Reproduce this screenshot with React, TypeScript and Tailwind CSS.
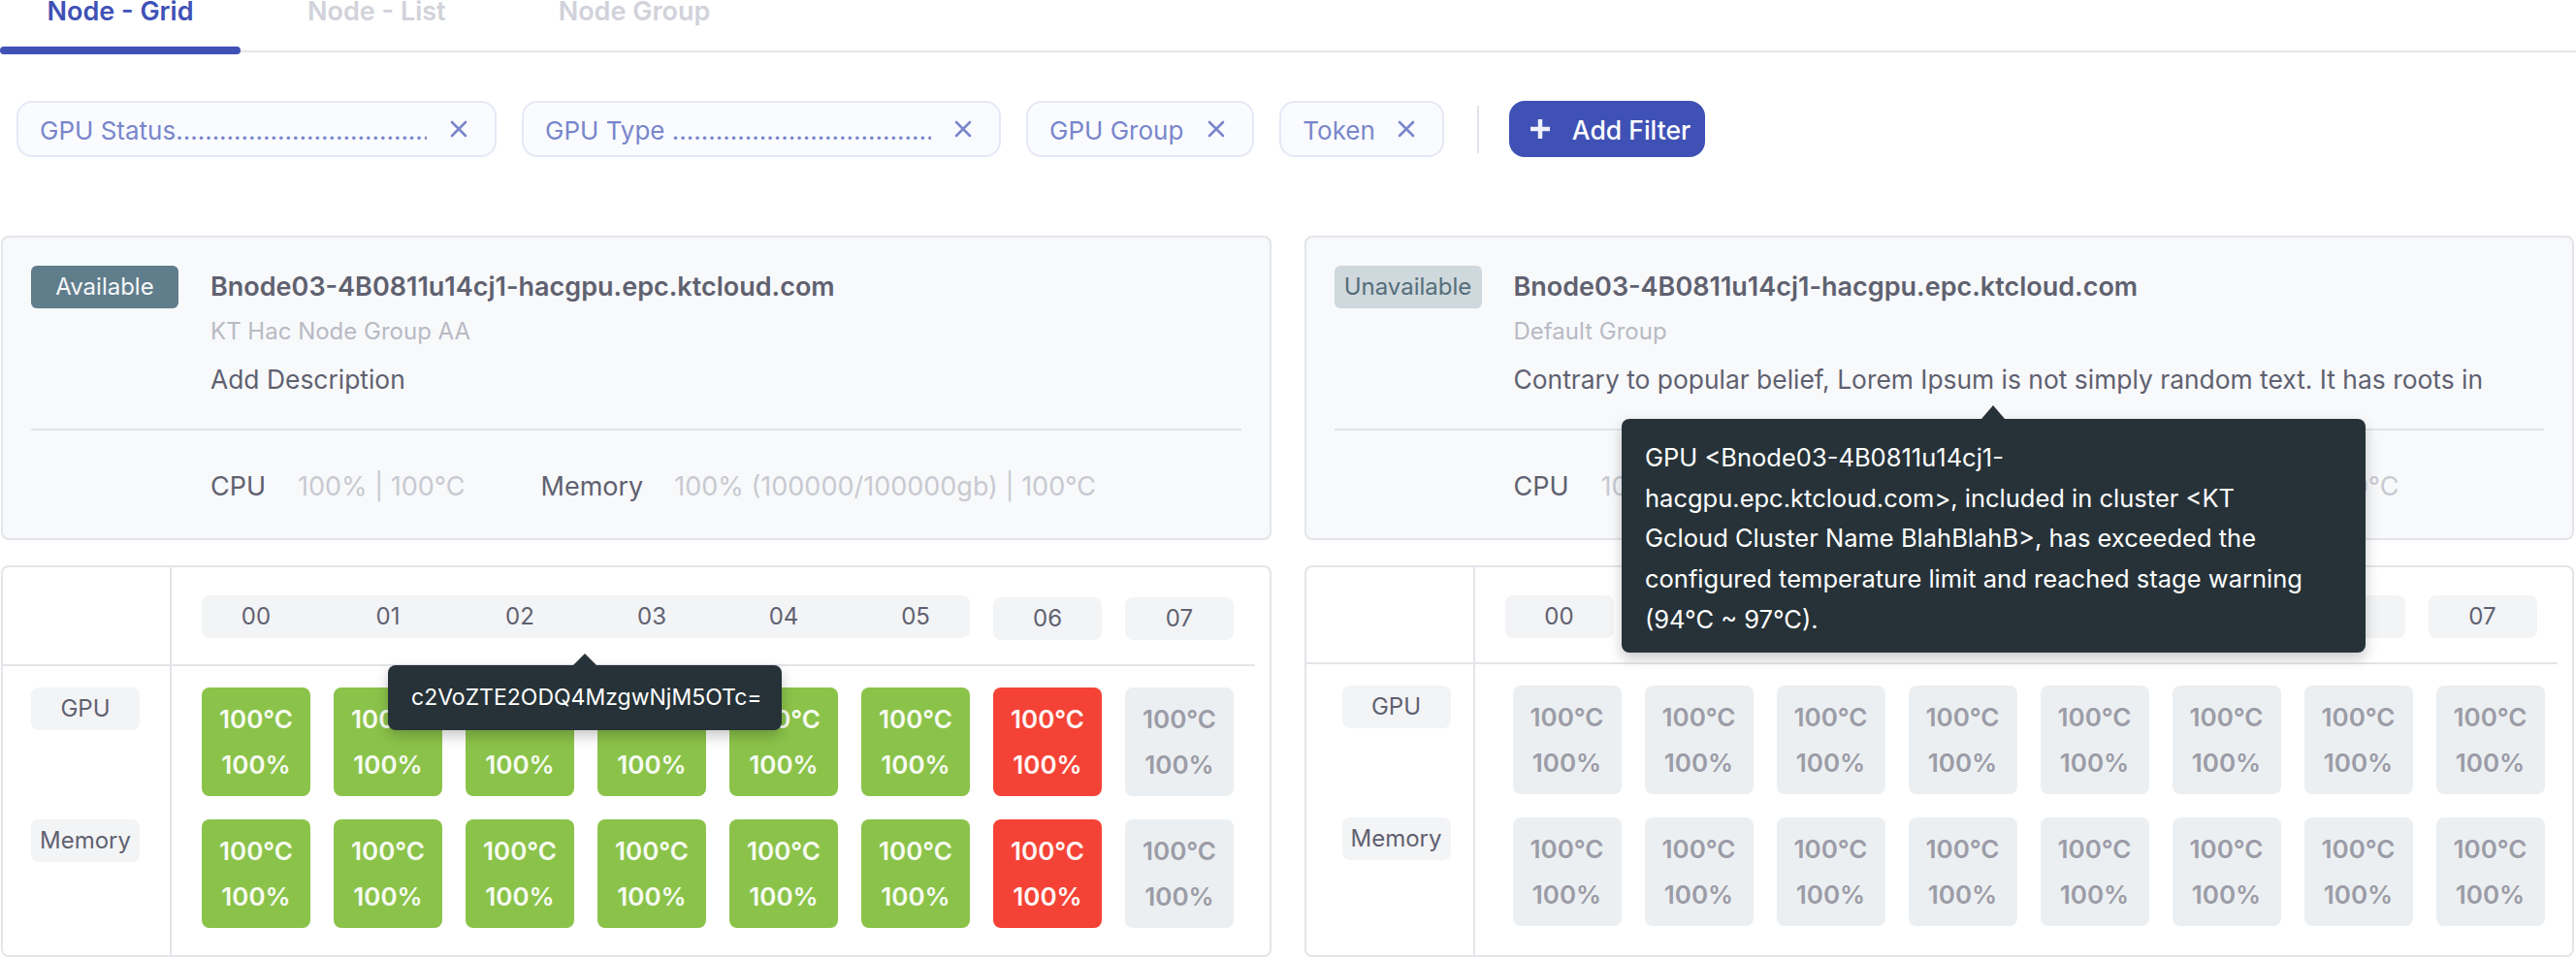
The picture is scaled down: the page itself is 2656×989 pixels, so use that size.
import React from "react";

type CellKind = "ok" | "bad" | "off";

function XIcon() {
  return (
    <svg width="18" height="18" viewBox="0 0 18 18" className="shrink-0">
      <path d="M2 2 L16 16 M16 2 L2 16" stroke="#7986cb" strokeWidth="2.6" strokeLinecap="round" fill="none" />
    </svg>
  );
}

function PlusIcon() {
  return (
    <svg width="22" height="22" viewBox="0 0 22 22" className="shrink-0">
      <path d="M11 1 V21 M1 11 H21" stroke="#eef0fa" strokeWidth="4.5" fill="none" />
    </svg>
  );
}

function Chip({ label, width, gap }: { label: string; width?: string; gap?: string }) {
  const fixed = !!width;
  return (
    <div
      className={
        "flex h-[58px] shrink-0 items-center rounded-[16px] border-2 border-[#e6e8f6] bg-[#fafbfe] pl-[22px] pr-[28px] " +
        (width ?? "")
      }
    >
      <span
        className={
          "whitespace-nowrap pt-[4px] text-[26px] leading-[32px] text-[#7986cb] " +
          (fixed ? "min-w-0 flex-1 overflow-hidden" : "")
        }
      >
        {label}
      </span>
      <span className={"flex " + (gap ?? "ml-[24px]")}>
        <XIcon />
      </span>
    </div>
  );
}

function NodeCard({
  status,
  title,
  group,
  desc,
}: {
  status: "Available" | "Unavailable";
  title: string;
  group: string;
  desc: string;
}) {
  const badge =
    status === "Available"
      ? "bg-[#607d8b] text-[#f5f7f8]"
      : "bg-[#cfd8dc] text-[#546e7a]";
  return (
    <div className="overflow-hidden rounded-[8px] border-2 border-[#e4e5ea] bg-[#f8f9fb] px-[29px] pt-[29px] pb-[35px]">
      <div className="flex gap-[33px]">
        <div
          className={
            "flex h-[44px] w-[152px] shrink-0 items-center justify-center rounded-[6px] text-[24px] " + badge
          }
        >
          {status}
        </div>
        <div className="min-w-0 flex-1">
          <div className="whitespace-nowrap text-[27px] font-semibold leading-[44px] text-[#5f6170]">{title}</div>
          <div className="mt-[8px] whitespace-nowrap text-[24px] leading-[32px] text-[#b8bac4]">{group}</div>
          <div className="mt-[15px] overflow-hidden whitespace-nowrap text-[26.4px] leading-[36px] text-[#5f6170]">
            {desc}
          </div>
        </div>
      </div>
      <div className="mt-[33px] h-[2px] bg-[#e3e4ea]" />
      <div className="mt-[40px] flex whitespace-nowrap pl-[185px] text-[27px] leading-[36px]">
        <span className="text-[#5f6170]">CPU</span>
        <span className="ml-[33px] text-[#c8c9d1]">100% | 100°C</span>
        <span className="ml-[78px] text-[#5f6170]">Memory</span>
        <span className="ml-[32px] text-[#c8c9d1]">100% (100000/100000gb) | 100°C</span>
      </div>
    </div>
  );
}

function Cell({ kind }: { kind: CellKind }) {
  const cls =
    kind === "ok"
      ? "bg-[#8bc34a] text-[#f7fbf2]"
      : kind === "bad"
      ? "bg-[#f44336] text-[#fff6f5]"
      : "bg-[#eceff1] text-[#9b9ca7]";
  return (
    <div
      className={
        "flex h-[112px] w-[112px] flex-col items-center justify-center rounded-[8px] text-[26px] font-semibold leading-[47px] " +
        cls
      }
    >
      <span>100°C</span>
      <span>100%</span>
    </div>
  );
}

const labels = ["00", "01", "02", "03", "04", "05", "06", "07"];

function HeaderPill({ children, extra }: { children: React.ReactNode; extra?: string }) {
  return (
    <div
      className={
        "flex h-[44px] w-[112px] items-center justify-center rounded-[8px] bg-[#f3f4f6] text-[24px] text-[#5f6170] " +
        (extra ?? "")
      }
    >
      {children}
    </div>
  );
}

function GridPanel({ variant }: { variant: "left" | "right" }) {
  const rowKinds: CellKind[] =
    variant === "left"
      ? ["ok", "ok", "ok", "ok", "ok", "ok", "bad", "off"]
      : ["off", "off", "off", "off", "off", "off", "off", "off"];
  return (
    <div className="flex h-[404px] flex-col overflow-hidden rounded-[8px] border-2 border-[#e4e5ea] bg-white">
      <div className="mr-[15px] flex border-b-2 border-[#e4e5ea]">
        <div className="w-[174px] shrink-0 border-r-2 border-[#e4e5ea]" />
        <div className="flex gap-[24px] pt-[29px] pb-[25px] pl-[31px]">
          {variant === "left" ? (
            <>
              <div className="grid h-[44px] w-[792px] grid-cols-6 gap-[24px] rounded-[8px] bg-[#f3f4f6] text-[24px] text-[#5f6170]">
                {labels.slice(0, 6).map((l) => (
                  <div key={l} className="flex items-center justify-center">
                    {l}
                  </div>
                ))}
              </div>
              <HeaderPill extra="mt-[2px]">06</HeaderPill>
              <HeaderPill extra="mt-[2px]">07</HeaderPill>
            </>
          ) : (
            labels.map((l) => <HeaderPill key={l}>{l}</HeaderPill>)
          )}
        </div>
      </div>
      <div className="flex flex-1">
        <div
          className={
            "flex w-[174px] shrink-0 flex-col gap-[24px] border-r-2 border-[#e4e5ea] pt-[22px] " +
            (variant === "left" ? "pl-[29px]" : "pl-[37px]")
          }
        >
          {["GPU", "Memory"].map((l) => (
            <div key={l} className="h-[112px]">
              <div className="flex h-[44px] w-[112px] items-center justify-center rounded-[8px] bg-[#f3f4f6] text-[24px] text-[#5f6170]">
                {l}
              </div>
            </div>
          ))}
        </div>
        <div className={"flex flex-col gap-[24px] pt-[22px] " + (variant === "left" ? "pl-[31px]" : "pl-[39px]")}>
          {[0, 1].map((r) => (
            <div key={r} className="flex gap-[24px]">
              {rowKinds.map((k, i) => (
                <Cell key={i} kind={k} />
              ))}
            </div>
          ))}
        </div>
      </div>
    </div>
  );
}

export default function App() {
  return (
    <div className="relative h-[989px] w-[2656px] overflow-hidden bg-white font-['Inter','Noto_Sans',sans-serif]">
      {/* Tabs */}
      <div className="-mt-[2px] flex h-[50px] items-start text-[27px] font-semibold leading-[27px]">
        <div className="flex w-[248px] justify-center text-[#3f51b5]">Node - Grid</div>
        <div className="ml-[69px] text-[#d1d2da]">Node - List</div>
        <div className="ml-[116px] text-[#d1d2da]">Node Group</div>
      </div>
      <div className="relative h-[8px]">
        <div className="absolute top-[4px] right-0 left-0 h-[2px] bg-[#e4e4ea]" />
        <div className="absolute top-0 left-0 h-[8px] w-[248px] rounded-full bg-[#3f51b5]" />
      </div>

      {/* Filters */}
      <div className="mt-[48px] flex h-[58px] items-center gap-[26px] pl-[17px]">
        <Chip label={"GPU Status" + ".".repeat(60)} width="w-[495px]" />
        <Chip label={"GPU Type " + ".".repeat(60)} width="w-[494px]" />
        <Chip label="GPU Group" gap="ml-[25px]" />
        <Chip label="Token" gap="ml-[23px]" />
        <div className="ml-[8px] h-[49px] w-[2px] bg-[#e2e3ea]" />
        <button className="ml-[5px] flex h-[58px] w-[202px] items-center rounded-[16px] bg-[#3f51b5] pl-[21px]">
          <PlusIcon />
          <span className="ml-[22px] pt-[2px] text-[26.5px] font-medium leading-[32px] text-white">Add Filter</span>
        </button>
      </div>

      {/* Node cards */}
      <div className="mt-[81px] grid grid-cols-2 gap-x-[34px] pr-[2px] pl-[1px]">
        <NodeCard
          status="Available"
          title="Bnode03-4B0811u14cj1-hacgpu.epc.ktcloud.com"
          group="KT Hac Node Group AA"
          desc="Add Description"
        />
        <NodeCard
          status="Unavailable"
          title="Bnode03-4B0811u14cj1-hacgpu.epc.ktcloud.com"
          group="Default Group"
          desc="Contrary to popular belief, Lorem Ipsum is not simply random text. It has roots in"
        />
      </div>

      {/* Grids */}
      <div className="mt-[26px] grid grid-cols-2 gap-x-[34px] pr-[2px] pl-[1px]">
        <GridPanel variant="left" />
        <GridPanel variant="right" />
      </div>

      {/* Tooltip 1 */}
      <div className="absolute top-[686px] left-[400px] flex h-[67px] w-[406px] items-center rounded-[8px] bg-[#263238] pl-[24px] text-[23px] text-white shadow-[0_6px_14px_rgba(0,0,0,0.22)]">
        <div className="absolute -top-[12px] left-[191px] h-0 w-0 border-x-[12px] border-b-[12px] border-x-transparent border-b-[#263238]" />
        c2VoZTE2ODQ4MzgwNjM5OTc=
      </div>

      {/* Tooltip 2 */}
      <div className="absolute top-[432px] left-[1672px] h-[241px] w-[767px] rounded-[8px] bg-[#263238] px-[24px] pt-[19px] text-[25.5px] leading-[41.67px] whitespace-nowrap text-white shadow-[0_6px_14px_rgba(0,0,0,0.22)]">
        <div className="absolute -top-[14px] left-[371px] h-0 w-0 border-x-[12px] border-b-[14px] border-x-transparent border-b-[#263238]" />
        GPU &lt;Bnode03-4B0811u14cj1-
        <br />
        hacgpu.epc.ktcloud.com&gt;, included in cluster &lt;KT
        <br />
        Gcloud Cluster Name BlahBlahB&gt;, has exceeded the
        <br />
        configured temperature limit and reached stage warning
        <br />
        (94°C ~ 97°C).
      </div>
    </div>
  );
}
